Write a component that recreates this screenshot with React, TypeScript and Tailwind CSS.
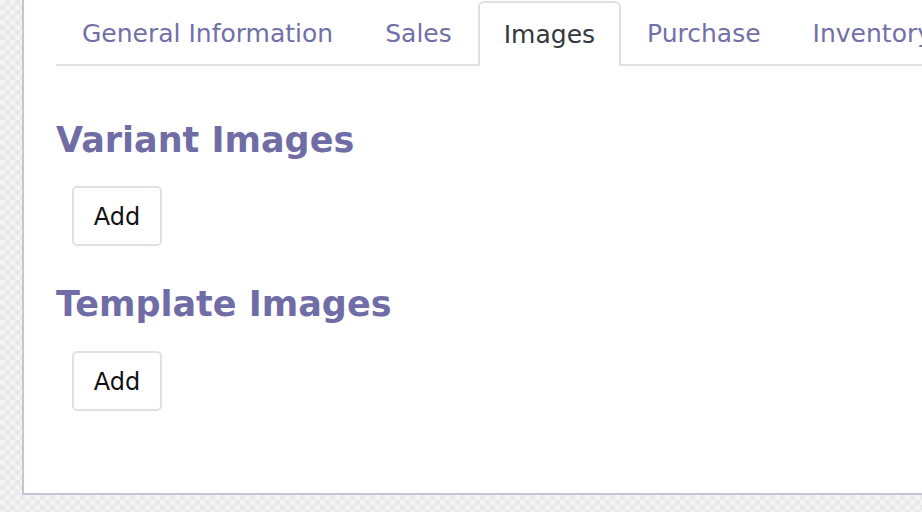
export default function App() {
  const tabs = ['General Information', 'Sales', 'Images', 'Purchase', 'Inventory'];
  const active = 'Images';

  return (
    <div
      className="h-[512px] w-[922px] overflow-hidden bg-[#efefef] bg-[repeating-conic-gradient(#e9e9e9_0_25%,#f3f3f3_0_50%)] bg-[length:10px_10px]"
      style={{ fontFamily: '"DejaVu Sans", "Open Sans", sans-serif' }}
    >
      <div className="ml-[22px] h-[495px] w-[1100px] border-b-2 border-l-2 border-[#c6c4d6] bg-white pl-[32px]">
        {/* Tabs */}
        <div className="flex h-[66px] items-end border-b-2 border-[#dee2e6] pt-[1px]">
          {tabs.map((tab) => (
            <div
              key={tab}
              className={`-mb-[2px] flex h-[65px] shrink-0 items-center px-[24px] text-[25px] ${
                tab === active
                  ? 'rounded-t-[6px] border-2 border-b-0 border-[#dee2e6] bg-white text-[#343a40]'
                  : 'border-2 border-transparent text-[#7170a8]'
              }`}
            >
              {tab}
            </div>
          ))}
        </div>

        {/* Variant images */}
        <h2 className="mt-[52px] text-[35px] font-bold leading-[44px] text-[#6f6ca6]">Variant Images</h2>
        <div className="mt-[24px] pl-[16px]">
          <button className="h-[60px] w-[90px] rounded-[5px] border-2 border-[#dee2e6] bg-white pt-[2px] text-[24px] text-[#111]">
            Add
          </button>
        </div>

        {/* Template images */}
        <h2 className="mt-[36px] text-[35px] font-bold leading-[44px] text-[#6f6ca6]">Template Images</h2>
        <div className="mt-[25px] pl-[16px]">
          <button className="h-[60px] w-[90px] rounded-[5px] border-2 border-[#dee2e6] bg-white pt-[2px] text-[24px] text-[#111]">
            Add
          </button>
        </div>
      </div>
    </div>
  );
}
